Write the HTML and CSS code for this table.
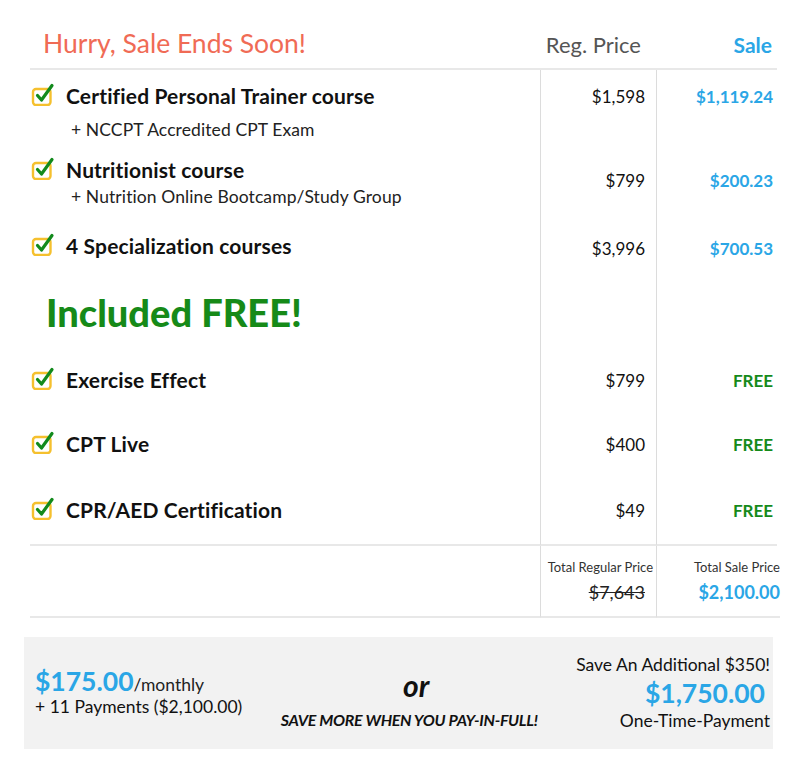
FILE: index.html
```html
<!DOCTYPE html>
<html>
<head>
<meta charset="utf-8">
<link rel="stylesheet" href="styles.css">
</head>
<body>
<div class="page">
  <div class="row head">
    <div class="cell c1"><span class="hurry">Hurry, Sale Ends Soon!</span></div>
    <div class="cell c2"><span class="reg-h">Reg. Price</span></div>
    <div class="cell c3"><span class="sale-h">Sale</span></div>
  </div>

  <div class="row r1">
    <div class="cell c1 item">
      <div class="title"><svg class="chk" viewBox="0 0 24 24"><rect x="2" y="7" width="17.5" height="16" rx="3" fill="none" stroke="#f5c02e" stroke-width="2.4"/><path d="M6.5 13.5 L10.5 18 L21 3.5" fill="none" stroke="#128a1c" stroke-width="3.2" stroke-linecap="round" stroke-linejoin="round"/></svg><span>Certified Personal Trainer course</span></div>
      <div class="sub">+ NCCPT Accredited CPT Exam</div>
    </div>
    <div class="cell c2"><span class="reg">$1,598</span></div>
    <div class="cell c3"><span class="sale">$1,119.24</span></div>
  </div>

  <div class="row r2">
    <div class="cell c1 item">
      <div class="title"><svg class="chk" viewBox="0 0 24 24"><rect x="2" y="7" width="17.5" height="16" rx="3" fill="none" stroke="#f5c02e" stroke-width="2.4"/><path d="M6.5 13.5 L10.5 18 L21 3.5" fill="none" stroke="#128a1c" stroke-width="3.2" stroke-linecap="round" stroke-linejoin="round"/></svg><span>Nutritionist course</span></div>
      <div class="sub">+ Nutrition Online Bootcamp/Study Group</div>
    </div>
    <div class="cell c2 mid"><span class="reg">$799</span></div>
    <div class="cell c3 mid"><span class="sale">$200.23</span></div>
  </div>

  <div class="row r3">
    <div class="cell c1 item">
      <div class="title"><svg class="chk" viewBox="0 0 24 24"><rect x="2" y="7" width="17.5" height="16" rx="3" fill="none" stroke="#f5c02e" stroke-width="2.4"/><path d="M6.5 13.5 L10.5 18 L21 3.5" fill="none" stroke="#128a1c" stroke-width="3.2" stroke-linecap="round" stroke-linejoin="round"/></svg><span>4 Specialization courses</span></div>
    </div>
    <div class="cell c2 mid"><span class="reg">$3,996</span></div>
    <div class="cell c3 mid"><span class="sale">$700.53</span></div>
  </div>

  <div class="row rfree">
    <div class="cell c1"><span class="included">Included FREE!</span></div>
    <div class="cell c2"></div>
    <div class="cell c3"></div>
  </div>

  <div class="row r4">
    <div class="cell c1 item">
      <div class="title"><svg class="chk" viewBox="0 0 24 24"><rect x="2" y="7" width="17.5" height="16" rx="3" fill="none" stroke="#f5c02e" stroke-width="2.4"/><path d="M6.5 13.5 L10.5 18 L21 3.5" fill="none" stroke="#128a1c" stroke-width="3.2" stroke-linecap="round" stroke-linejoin="round"/></svg><span>Exercise Effect</span></div>
    </div>
    <div class="cell c2 mid"><span class="reg">$799</span></div>
    <div class="cell c3 mid"><span class="free">FREE</span></div>
  </div>

  <div class="row r5">
    <div class="cell c1 item">
      <div class="title"><svg class="chk" viewBox="0 0 24 24"><rect x="2" y="7" width="17.5" height="16" rx="3" fill="none" stroke="#f5c02e" stroke-width="2.4"/><path d="M6.5 13.5 L10.5 18 L21 3.5" fill="none" stroke="#128a1c" stroke-width="3.2" stroke-linecap="round" stroke-linejoin="round"/></svg><span>CPT Live</span></div>
    </div>
    <div class="cell c2 mid"><span class="reg">$400</span></div>
    <div class="cell c3 mid"><span class="free">FREE</span></div>
  </div>

  <div class="row r6">
    <div class="cell c1 item">
      <div class="title"><svg class="chk" viewBox="0 0 24 24"><rect x="2" y="7" width="17.5" height="16" rx="3" fill="none" stroke="#f5c02e" stroke-width="2.4"/><path d="M6.5 13.5 L10.5 18 L21 3.5" fill="none" stroke="#128a1c" stroke-width="3.2" stroke-linecap="round" stroke-linejoin="round"/></svg><span>CPR/AED Certification</span></div>
    </div>
    <div class="cell c2 mid"><span class="reg">$49</span></div>
    <div class="cell c3 mid"><span class="free">FREE</span></div>
  </div>

  <div class="row totals">
    <div class="cell c1"></div>
    <div class="cell c2 tot">
      <div class="tot-label">Total Regular Price</div>
      <div class="tot-reg">$7,643</div>
    </div>
    <div class="cell c3 tot">
      <div class="tot-label">Total Sale Price</div>
      <div class="tot-sale">$2,100.00</div>
    </div>
  </div>

  <div class="pay">
    <div class="pay-left">
      <div><span class="big-blue">$175.00</span><span class="monthly">/monthly</span></div>
      <div class="pay-note">+ 11 Payments ($2,100.00)</div>
    </div>
    <div class="pay-mid">
      <div class="or">or</div>
      <div class="save-more">SAVE MORE WHEN YOU PAY-IN-FULL!</div>
    </div>
    <div class="pay-right">
      <div class="pay-note">Save An Additional $350!</div>
      <div class="big-blue">$1,750.00</div>
      <div class="pay-note">One-Time-Payment</div>
    </div>
  </div>
</div>
</body>
</html>
```

FILE: styles.css
```css
* { box-sizing: border-box; }
html, body { margin: 0; padding: 0; background: #fff; }
body {
  font-family: Lato, "Open Sans", "Liberation Sans", sans-serif;
  color: #111;
  width: 800px;
  height: 767px;
  overflow: hidden;
}

.row {
  display: grid;
  grid-template-columns: 510px 116px 121px;
  margin-left: 30px;
}
.cell { display: flex; }
.c2, .c3 { justify-content: flex-end; }
.c2 { padding-right: 11px; }
.c3 { padding-right: 4px; }
.row:not(.head) .c2, .row:not(.head) .c3 { border-left: 1px solid #dcdcdc; }

.head { height: 70px; }
.head .cell { border-bottom: 2px solid #e8e8e8; align-items: flex-end; padding-bottom: 9px; }
.head .c2 { padding-right: 15px; }
.head .c3 { padding-right: 5px; }
.hurry { font-size: 26.5px; color: #f06b55; margin-left: 13px; line-height: 32px; }
.reg-h { font-size: 22px; color: #555; line-height: 28px; }
.sale-h { font-size: 21px; color: #2aa6e6; font-weight: 700; line-height: 28px; }

.item { flex-direction: column; justify-content: center; }
.title { display: flex; align-items: center; font-size: 21px; font-weight: 700; line-height: 26px; color: #111; letter-spacing: 0.15px; }
.chk { width: 24px; height: 24px; margin-left: 1px; margin-right: 11px; flex: none; margin-top: -4px; }
.sub { font-size: 17.5px; line-height: 22px; color: #222; letter-spacing: 0.1px; }

.reg { font-size: 17px; line-height: 26px; color: #111; }
.sale { font-size: 17px; line-height: 26px; color: #2aa6e6; font-weight: 700; }
.free { font-size: 17px; line-height: 26px; color: #158a1a; font-weight: 700; }
.mid { align-items: center; }

.r1 { height: 80px; }
.r1 .item { justify-content: flex-start; padding-top: 13px; }
.r1 .sub { margin-top: 10px; margin-left: 41px; }
.r1 .c2, .r1 .c3 { padding-top: 14px; }
.r2 { height: 68px; }
.r2 .item { justify-content: flex-start; padding-top: 7px; }
.r2 .sub { margin-top: 3px; margin-left: 41px; }
.r2 .mid { padding-bottom: 6px; }
.r3 { height: 58px; }
.r3 .item { padding-bottom: 2px; }
.r3 .mid { padding-top: 3px; }
.rfree { height: 72px; }
.rfree .c1 { align-items: center; }
.included { font-size: 38px; font-weight: 900; color: #168a18; margin-left: 16px; line-height: 44px; }
.r4 { height: 64px; }
.r5 { height: 64px; }
.r6 { height: 70px; }
.r4 .mid, .r5 .mid, .r6 .mid { padding-top: 1px; }
.r6 .cell { border-bottom: 2px solid #e8e8e8; }

.totals { height: 72px; }
.totals .cell { border-bottom: 2px solid #e8e8e8; }
.tot { flex-direction: column; justify-content: flex-start; align-items: flex-end; padding-top: 13px; }
.tot.c2 { padding-right: 3px; }
.tot.c3 { padding-right: 0; margin-right: -3px; }
.tot-label { font-size: 13px; line-height: 16px; color: #333; }
.tot-reg { font-size: 18px; line-height: 22px; margin-top: 6px; text-decoration: line-through; color: #222; padding-right: 8px; }
.tot-sale { font-size: 18px; line-height: 22px; margin-top: 6px; color: #2aa6e6; font-weight: 700; }

.pay {
  margin: 19px 0 0 24px;
  width: 749px;
  height: 112px;
  background: #f2f2f2;
  display: flex;
  align-items: center;
  justify-content: space-between;
  padding: 0 3px 0 11px;
}
.pay-left { padding-bottom: 3px; }
.big-blue { font-size: 26.5px; font-weight: 700; color: #2aa6e6; line-height: 30px; }
.monthly { font-size: 17.5px; color: #222; }
.pay-note { font-size: 17.5px; line-height: 22px; color: #111; }
.pay-mid { display: flex; flex-direction: column; align-items: center; margin-left: 0; padding-top: 12px; }
.or { font-size: 30px; font-weight: 700; font-style: italic; line-height: 32px; margin-left: 14px; }
.save-more { font-size: 16px; font-weight: 700; font-style: italic; margin-top: 10px; line-height: 18px; letter-spacing: -0.3px; }
.pay-right { display: flex; flex-direction: column; align-items: flex-end; }
.pay-right .big-blue { line-height: 34px; margin-right: 5px; }
```
